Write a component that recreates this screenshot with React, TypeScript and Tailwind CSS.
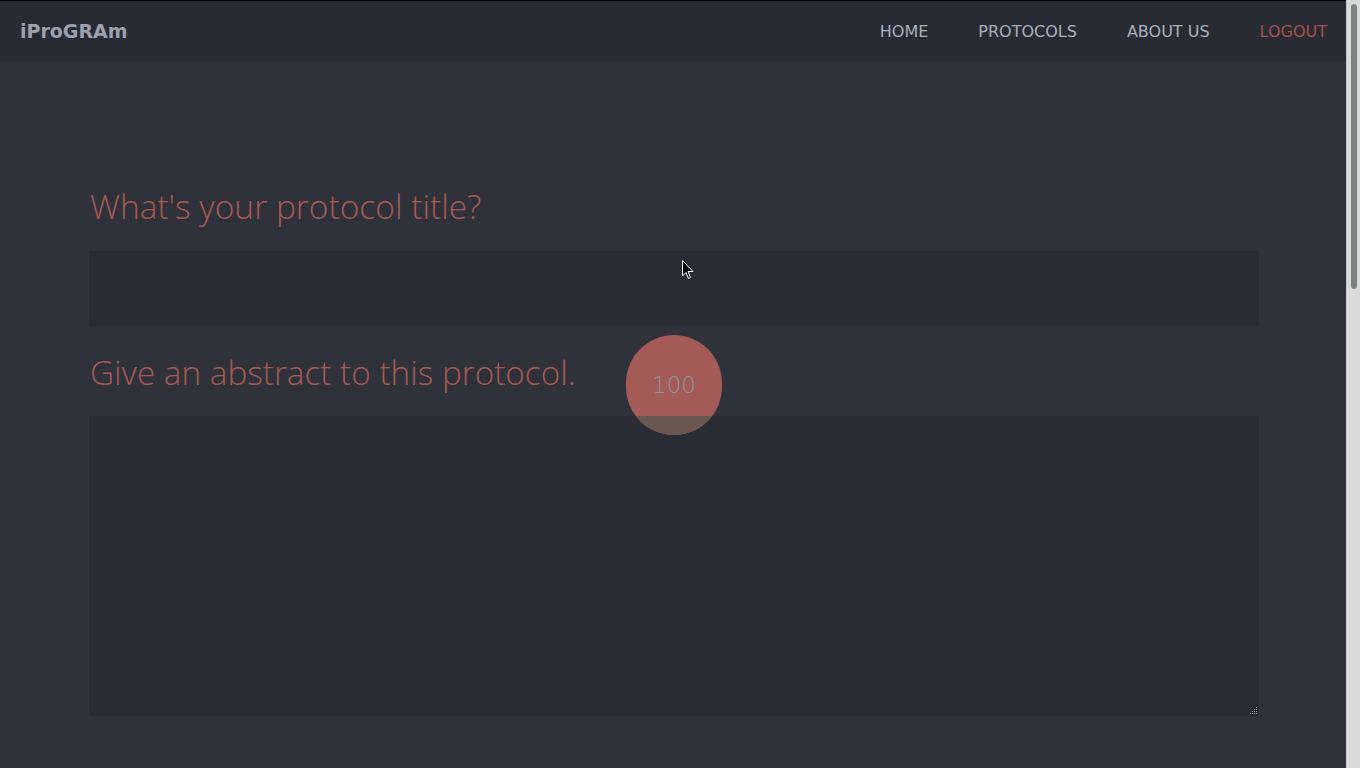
import React from "react";

export default function App() {
  return (
    <div className="flex h-[768px] w-full overflow-hidden bg-[#2f323b]">
      <div className="relative min-w-0 flex-1">
        <nav className="flex h-[62px] items-center justify-between border-t border-black bg-[#282b33] pl-5 pr-[19px]">
          <div className="font-['DejaVu_Sans',sans-serif] text-[19px] font-bold text-[#9aa1af]">
            iProGRAm
          </div>
          <ul className="flex items-center gap-[50px] font-['DejaVu_Sans',sans-serif] text-[16px] text-[#a9b0bf]">
            <li>HOME</li>
            <li>PROTOCOLS</li>
            <li>ABOUT US</li>
            <li className="text-[#a5524d]">LOGOUT</li>
          </ul>
        </nav>

        <main className="mx-auto w-[1170px] translate-x-[1px] pt-[120px] font-['Open_Sans',sans-serif]">
          <h1 className="pl-[1px] text-[33.5px] font-light leading-[48px] text-[#a85a52]">
            What's your protocol title?
          </h1>
          <div className="mt-[21px] h-[75px] w-full bg-[#292c34]" />
          <h2 className="mt-[22px] pl-[1px] text-[33.3px] font-light leading-[48px] text-[#a85a52]">
            Give an abstract to this protocol.
          </h2>
          <div className="relative z-10 mt-[20px] h-[300px] w-full bg-[#292c34]">
            <svg className="absolute bottom-[1px] right-[1px]" width="9" height="9" viewBox="0 0 9 9">
              <g fill="#8a8d94">
                <rect x="7" y="1" width="1" height="1" />
                <rect x="5" y="3" width="1" height="1" />
                <rect x="7" y="3" width="1" height="1" />
                <rect x="3" y="5" width="1" height="1" />
                <rect x="5" y="5" width="1" height="1" />
                <rect x="7" y="5" width="1" height="1" />
                <rect x="1" y="7" width="1" height="1" />
                <rect x="3" y="7" width="1" height="1" />
                <rect x="5" y="7" width="1" height="1" />
                <rect x="7" y="7" width="1" height="1" />
              </g>
            </svg>
          </div>
        </main>

        {/* click highlight overlay */}
        <div className="absolute left-[626px] top-[335px] z-20 flex h-[100px] w-[96px] items-center justify-center overflow-hidden rounded-full bg-[#a45a57]">
          <div className="absolute bottom-0 left-0 h-[19px] w-full bg-[#6b5650]" />
          <span className="relative font-['DejaVu_Sans',sans-serif] text-[23px] font-extralight text-[#8a999e]">
            100
          </span>
        </div>

        {/* mouse cursor */}
        <svg className="absolute left-[682px] top-[260px] z-30" width="13" height="20" viewBox="0 0 13 20">
          <path d="M0.5 0.5 L0.5 16 L4 12.5 L6.5 18.5 L8.5 17.5 L6 11.5 L11 11.5 Z" fill="#000" stroke="#fff" strokeWidth="1" />
        </svg>
      </div>

      {/* scrollbar */}
      <div className="w-[14px] shrink-0 border-l border-[#c8c8c8] bg-[#dadada] pl-[4px] pt-[4px]">
        <div className="h-[285px] w-[6px] rounded-full bg-[#7f8181]" />
      </div>
    </div>
  );
}
